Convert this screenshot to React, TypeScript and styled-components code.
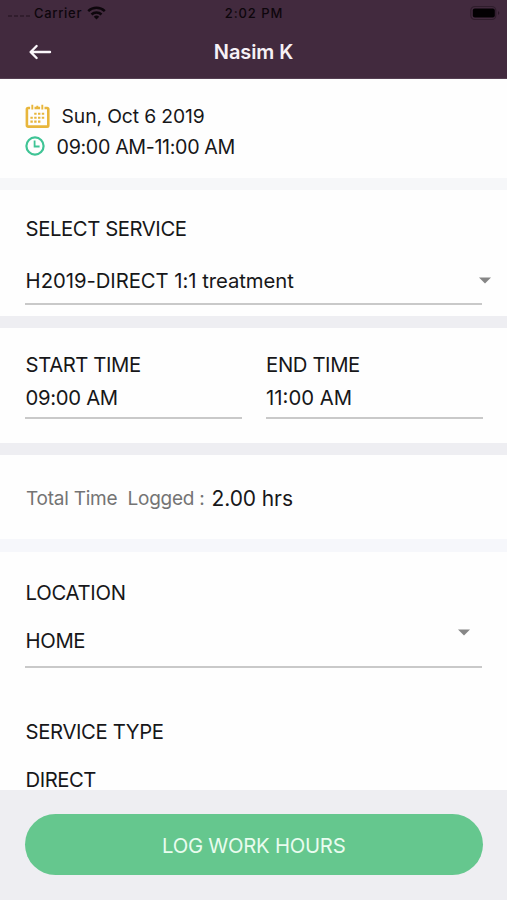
import React from "react";
import styled, { createGlobalStyle } from "styled-components";

const GlobalStyle = createGlobalStyle`
  * { box-sizing: border-box; }
  html, body { margin: 0; padding: 0; }
  body { background: #fefefe; font-family: Inter, "Liberation Sans", sans-serif; color: #171719; overflow: hidden; }
`;

const Screen = styled.div`
  display: flex;
  flex-direction: column;
  width: 507px;
  height: 900px;
  overflow: hidden;
  background: #fefefe;
`;

const Header = styled.header`
  flex: none;
  height: 79px;
  background: #422a3e;
  border-bottom: 1px solid #553f52;
`;

const StatusBar = styled.div`
  display: grid;
  grid-template-columns: 1fr auto 1fr;
  align-items: center;
  height: 26px;
  padding: 0 7px 0 8px;
  color: #0d060c;
  font-size: 13px;
  font-weight: 500;
`;

const Carrier = styled.div`
  display: flex;
  align-items: center;
  letter-spacing: 0.7px;
`;

const Dots = styled.svg`
  width: 22px;
  height: 8px;
  margin-right: 4px;
`;

const Wifi = styled.svg`
  width: 19px;
  height: 14px;
  margin-left: 5px;
`;

const Clock = styled.div`
  letter-spacing: 0.9px;
`;

const Battery = styled.svg`
  justify-self: end;
  width: 30px;
  height: 16px;
`;

const NavBar = styled.div`
  display: grid;
  grid-template-columns: 60px 1fr 60px;
  align-items: center;
  height: 52px;
`;

const BackButton = styled.button`
  display: flex;
  width: 24px;
  height: 18px;
  margin-left: 28px;
  padding: 0;
  border: 0;
  background: none;
`;

const Title = styled.h1`
  margin: 0;
  text-align: center;
  color: #f6f1f6;
  font-size: 20px;
  font-weight: 600;
  line-height: 24px;
  letter-spacing: -0.1px;
`;

const Content = styled.main`
  flex: 1;
  min-height: 0;
  overflow: hidden;
`;

const Section = styled.section<{ $height: number; $top: number }>`
  height: ${(p) => p.$height}px;
  padding: ${(p) => p.$top}px 25px 0 26px;
`;

const Band = styled.div<{ $tone?: string; $height?: number }>`
  height: ${(p) => p.$height ?? 12}px;
  background: ${(p) => p.$tone ?? "#eeeef2"};
`;

const Line = styled.div<{ $track?: number; $gap?: number; $size?: number; $height?: number }>`
  height: ${(p) => p.$height ?? 24}px;
  margin-top: ${(p) => p.$gap ?? 0}px;
  margin-left: -0.4px;
  font-size: ${(p) => p.$size ?? 20.3}px;
  line-height: ${(p) => p.$height ?? 24}px;
  white-space: pre;
  letter-spacing: ${(p) => p.$track ?? 0}px;
`;

const IconLine = styled.div<{ $gap: number }>`
  display: flex;
  align-items: center;
  gap: ${(p) => p.$gap}px;
  height: 30px;
  margin-left: -1px;

  svg { flex: none; }
`;

const Field = styled.div<{ $pad: number; $gap?: number }>`
  display: flex;
  justify-content: space-between;
  margin: ${(p) => p.$gap ?? 0}px 0 0 -1px;
  padding: 0 0 ${(p) => p.$pad}px 1px;
  border-bottom: 2px solid #c9c9c9;
`;

const Caret = styled.svg<{ $right: number; $top: number }>`
  flex: none;
  width: 12px;
  height: 7px;
  margin: ${(p) => p.$top}px ${(p) => p.$right}px 0 0;
`;

const Times = styled.div`
  display: grid;
  grid-template-columns: 216px 216px;
  column-gap: 24.5px;
`;

const TotalRow = styled.div`
  display: flex;
  align-items: center;
  gap: 7px;
  height: 24px;
  white-space: pre;
`;

const TotalLabel = styled.span`
  color: #747474;
  font-size: 19px;
  letter-spacing: -0.24px;
`;

const TotalValue = styled.span`
  font-size: 21px;
  letter-spacing: -0.1px;
`;

const Footer = styled.footer`
  flex: none;
  height: 110px;
  padding: 24px 24.5px 0 25px;
  background: #eeeef2;
`;

const LogButton = styled.button`
  display: block;
  width: 100%;
  height: 61px;
  padding: 2px 0 0;
  border: 0;
  border-radius: 31px;
  background: #65c78e;
  color: #e9fcef;
  font: 400 20.3px/59px Inter, sans-serif;
  letter-spacing: -0.25px;
`;

const CalendarIcon = () => (
  <svg width="25" height="25" viewBox="0 0 25 25">
    <rect x="1.9" y="4" width="21.4" height="18.6" rx="1.2" fill="none" stroke="#e8b63c" strokeWidth="2.6" />
    <path d="M7.3 1v6M17.3 1v6" stroke="#fefefe" strokeWidth="4.4" />
    <path d="M7.3 0.8v4.6M12.3 1.8v3M17.3 0.8v4.6" stroke="#e8b63c" strokeWidth="1.9" />
    <path d="M9.2 9.8h10.5M5.4 13.7h14.3M5.4 17.6h10.5" stroke="#e8b63c" strokeWidth="2.1" strokeDasharray="2.4 1.4" />
  </svg>
);

const TimeIcon = () => (
  <svg width="20" height="20" viewBox="0 0 20 20" fill="none" stroke="#3fc495">
    <circle cx="10" cy="10" r="8.6" strokeWidth="2.2" />
    <path d="M9.6 4.6v5.9h5" strokeWidth="1.8" />
  </svg>
);

const DropCaret = ({ right, top }: { right: number; top: number }) => (
  <Caret $right={right} $top={top} viewBox="0 0 12 7">
    <path d="M0 .4h12L6 6.6z" fill="#868686" />
  </Caret>
);

export default function App() {
  return (
    <Screen>
      <GlobalStyle />
      <Header>
        <StatusBar>
          <Carrier>
            <Dots viewBox="0 0 22 8">
              <path d="M0 7h4M6 7h4M12 7h4M18 7h4" stroke="#2c1a29" strokeWidth="1.6" />
            </Dots>
            Carrier
            <Wifi viewBox="0 0 19 14" fill="none" stroke="#0d060c" strokeWidth="2.5">
              <path d="M1.2 5.2a12 12 0 0 1 16.6 0M4.5 8.5a7.3 7.3 0 0 1 10 0" />
              <path d="M9.5 13.5l-2.7-2.8a4 4 0 0 1 5.4 0z" fill="#0d060c" stroke="none" />
            </Wifi>
          </Carrier>
          <Clock>2:02 PM</Clock>
          <Battery viewBox="0 0 30 16">
            <rect x=".8" y="1.5" width="25" height="13" rx="4" fill="none" stroke="#2f1d2c" strokeWidth="1.2" />
            <rect x="2.8" y="3.5" width="22" height="9" rx="2" fill="#030103" />
            <path d="M28 6v4q1.3-.8 1.3-2T28 6z" fill="#2a1827" />
          </Battery>
        </StatusBar>
        <NavBar>
          <BackButton aria-label="Back">
            <svg width="24" height="18" viewBox="0 0 24 18" fill="none" stroke="#fbf7fb" strokeWidth="2.4" strokeLinecap="round" strokeLinejoin="round">
              <path d="M22 9H3M8.6 3L2.6 9l6 6" />
            </svg>
          </BackButton>
          <Title>Nasim K</Title>
        </NavBar>
      </Header>
      <Content>
        <Section $height={99} $top={22}>
          <IconLine $gap={12}>
            <CalendarIcon />
            <Line $size={19.3} $track={-0.12}>Sun, Oct 6 2019</Line>
          </IconLine>
          <IconLine $gap={12}>
            <TimeIcon />
            <Line $size={19.7} $track={-0.36} $gap={1}>09:00 AM-11:00 AM</Line>
          </IconLine>
        </Section>
        <Band $tone="#f6f7f9" />
        <Section $height={126} $top={27}>
          <Line $track={-0.42}>SELECT SERVICE</Line>
          <Field $gap={27} $pad={10}>
            <Line $gap={1} $track={-0.05}>H2019-DIRECT 1:1 treatment</Line>
            <DropCaret right={-9} top={9} />
          </Field>
        </Section>
        <Band />
        <Section $height={115} $top={25}>
          <Times>
            <div>
              <Line $track={-0.42}>START TIME</Line>
              <Field $pad={7}><Line $gap={9} $track={-0.33}>09:00 AM</Line></Field>
            </div>
            <div>
              <Line $track={-0.38}>END TIME</Line>
              <Field $pad={7}><Line $gap={9}>11:00 AM</Line></Field>
            </div>
          </Times>
        </Section>
        <Band />
        <Section $height={84} $top={31}>
          <TotalRow>
            <TotalLabel>Total Time  Logged :</TotalLabel>
            <TotalValue>2.00 hrs</TotalValue>
          </TotalRow>
        </Section>
        <Band $tone="#f6f7fb" $height={13} />
        <Section $height={238} $top={29}>
          <Line $track={-0.3}>LOCATION</Line>
          <Field $pad={13}>
            <Line $gap={24} $track={-0.4}>HOME</Line>
            <DropCaret right={12} top={24} />
          </Field>
          <Line $gap={52} $track={-0.38}>SERVICE TYPE</Line>
          <Line $gap={26} $height={20} $track={-0.5}>DIRECT</Line>
        </Section>
      </Content>
      <Footer>
        <LogButton>LOG WORK HOURS</LogButton>
      </Footer>
    </Screen>
  );
}
